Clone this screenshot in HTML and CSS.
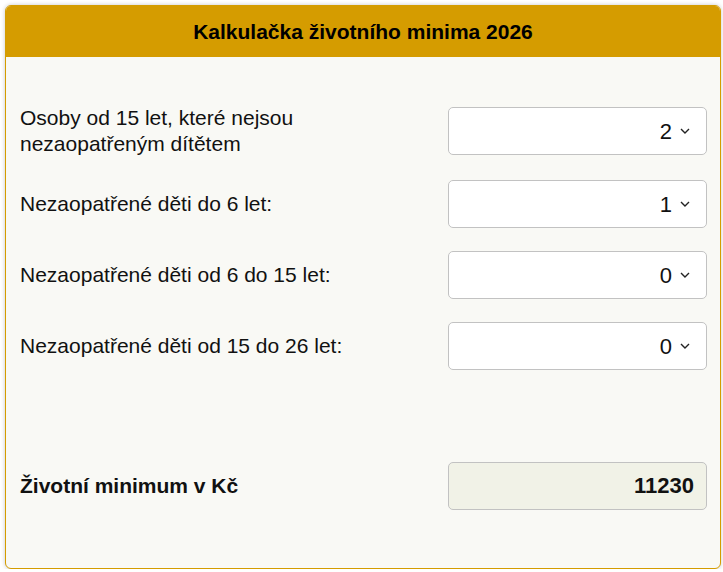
FILE: index.html
```html
<!DOCTYPE html>
<html lang="cs">
<head>
<meta charset="utf-8">
<title>Kalkulačka životního minima 2026</title>
<link rel="stylesheet" href="styles.css">
</head>
<body>
<div class="card">
  <div class="card-header">Kalkulačka životního minima 2026</div>
  <div class="card-body">
    <div class="rows">
      <div class="row">
        <label class="label" for="s1">Osoby od 15 let, které nejsou nezaopatřeným dítětem</label>
        <div class="select-wrap">
          <select id="s1" class="select"><option>0</option><option>1</option><option selected>2</option><option>3</option></select>
          <svg class="chev" width="10" height="6" viewBox="0 0 10 6"><polyline points="1,1 5,5 9,1" fill="none" stroke="#222" stroke-width="1.4"/></svg>
        </div>
      </div>
      <div class="row">
        <label class="label" for="s2">Nezaopatřené děti do 6 let:</label>
        <div class="select-wrap">
          <select id="s2" class="select"><option>0</option><option selected>1</option><option>2</option></select>
          <svg class="chev" width="10" height="6" viewBox="0 0 10 6"><polyline points="1,1 5,5 9,1" fill="none" stroke="#222" stroke-width="1.4"/></svg>
        </div>
      </div>
      <div class="row">
        <label class="label" for="s3">Nezaopatřené děti od 6 do 15 let:</label>
        <div class="select-wrap">
          <select id="s3" class="select"><option selected>0</option><option>1</option><option>2</option></select>
          <svg class="chev" width="10" height="6" viewBox="0 0 10 6"><polyline points="1,1 5,5 9,1" fill="none" stroke="#222" stroke-width="1.4"/></svg>
        </div>
      </div>
      <div class="row">
        <label class="label" for="s4">Nezaopatřené děti od 15 do 26 let:</label>
        <div class="select-wrap">
          <select id="s4" class="select"><option selected>0</option><option>1</option><option>2</option></select>
          <svg class="chev" width="10" height="6" viewBox="0 0 10 6"><polyline points="1,1 5,5 9,1" fill="none" stroke="#222" stroke-width="1.4"/></svg>
        </div>
      </div>
    </div>
    <div class="row result-row">
      <div class="label strong">Životní minimum v Kč</div>
      <div class="result">11230</div>
    </div>
  </div>
</div>
</body>
</html>
```
FILE: styles.css
```css
* { box-sizing: border-box; }
html, body { margin: 0; padding: 0; background: #ffffff; }
body {
  font-family: "Liberation Sans", Arial, sans-serif;
  font-size: 21px;
  color: #111;
}
.card {
  margin: 5px 2px 0 5px;
  width: 716px;
  height: 564px;
  border: 1px solid #d49c00;
  border-radius: 6px;
  background: #f9f9f5;
  box-shadow: 0 0 4px rgba(0, 0, 0, 0.22);
  overflow: hidden;
  display: flex;
  flex-direction: column;
}
.card-header {
  background: #d59c00;
  height: 51px;
  line-height: 24px;
  padding: 14px 0 13px;
  text-align: center;
  font-weight: bold;
  color: #000;
}
.card-body {
  padding: 48px 13px 0 14px;
}
.rows {
  display: flex;
  flex-direction: column;
  gap: 23px;
}
.row {
  display: flex;
  align-items: center;
  justify-content: space-between;
  min-height: 48px;
}
.label {
  flex: 1;
  padding-right: 24px;
  line-height: 26px;
}
.strong { font-weight: bold; }
.select-wrap {
  position: relative;
  width: 259px;
  height: 48px;
  flex: none;
}
.select {
  appearance: none;
  -webkit-appearance: none;
  width: 100%;
  height: 48px;
  border: 1px solid #c2c2c2;
  border-radius: 5px;
  background: #ffffff;
  font-family: inherit;
  font-size: 22px;
  color: #111;
  text-align: right;
  text-align-last: right;
  padding: 0 34px 0 10px;
  margin: 0;
}
.chev {
  position: absolute;
  right: 17px;
  top: 21px;
  pointer-events: none;
}
.result-row {
  margin-top: 92px;
}
.result {
  width: 259px;
  height: 48px;
  flex: none;
  border: 1px solid #c2c2c2;
  border-radius: 5px;
  background: #f1f2e7;
  font-weight: bold;
  font-size: 22px;
  text-align: right;
  padding-right: 12px;
  line-height: 46px;
}
```
